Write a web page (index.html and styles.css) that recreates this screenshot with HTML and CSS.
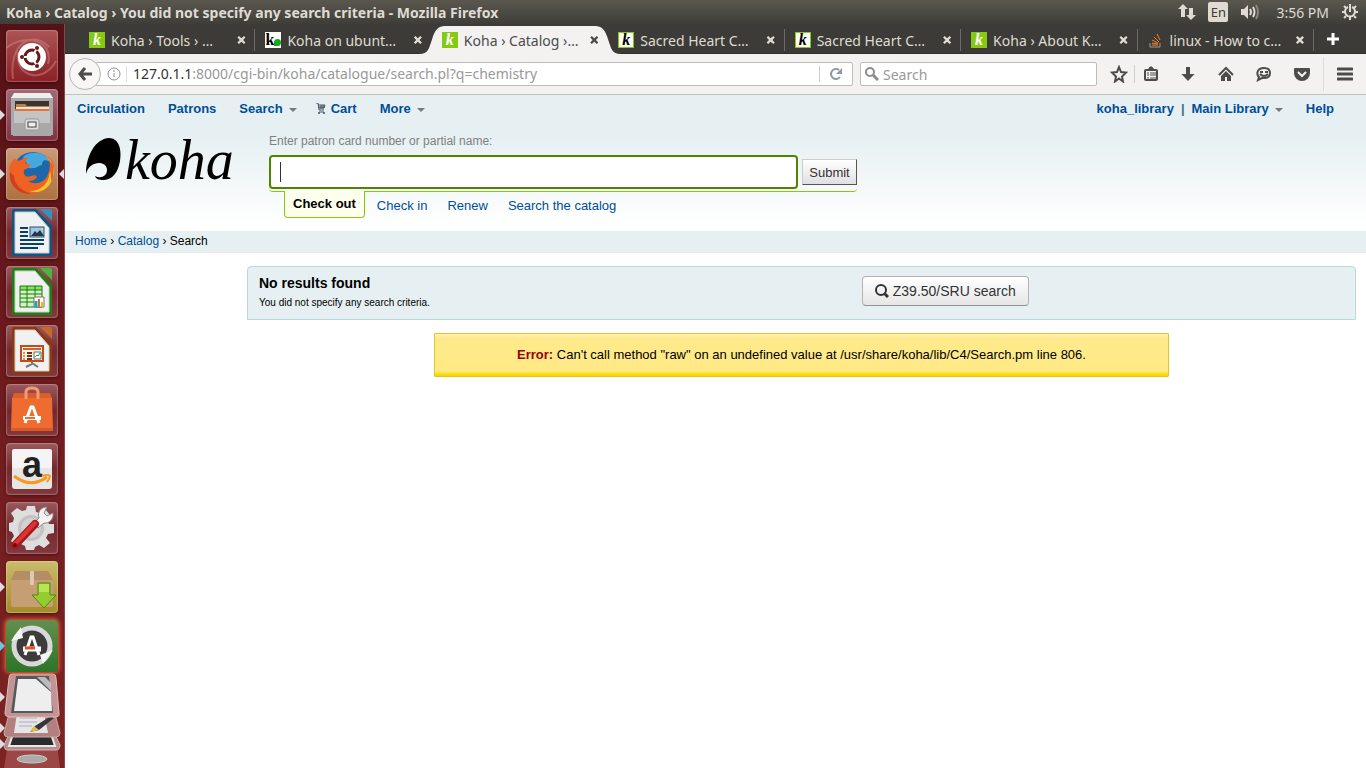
FILE: index.html
```html
<!doctype html>
<html lang="en">
  <head>
    <meta charset="UTF-8" />
    <meta name="viewport" content="width=device-width, initial-scale=1.0" />
    <title>Koha › Catalog › You did not specify any search criteria</title>
    <link rel="stylesheet" href="styles.css">
  </head>

  <body>
    <header class="panel">
      <div class="panel-title">Koha › Catalog › You did not specify any search criteria - Mozilla Firefox</div>
      <div class="panel-tray">
        <svg width="18" height="18" viewBox="0 0 18 18" fill="#dfdbd2"><path d="M5 1l5 5H7v8H3V6H0zM13 17l-5-5h3V5h4v7h3z"/></svg>
        <span class="lang">En</span>
        <svg width="20" height="16" viewBox="0 0 20 16" fill="none" stroke="#dfdbd2" stroke-width="2"><path d="M1 5h3l4-4v14l-4-4H1z" fill="#dfdbd2" stroke="none"/><path d="M10 5q2 3 0 6M13 3q3 5 0 10"/><path d="M16 1q4 7 0 14" stroke="#8a877e"/></svg>
        <span class="clock">3:56 PM</span>
        <svg width="18" height="18" viewBox="0 0 18 18" fill="none" stroke="#dfdbd2" stroke-width="2"><path d="M7 4a5 5 0 1 0 4 0"/><path d="M9 1v8M1 9h3M14 9h3M3 3l2 2M15 3l-2 2M3 15l2-2M15 15l-2-2M9 14v3"/></svg>
      </div>
    </header>

    <div class="desktop">
      <nav class="launcher" aria-label="Launcher">
        <button class="tile dash" aria-label="Dash">
          <svg viewBox="0 0 52 52"><g fill="none" stroke="#d99a9a" stroke-width="2" opacity=".4"><path d="M7 49C2 12 28 0 43 17M0 18C20 3 48 10 42 34M50 31C36 56 8 45 12 22"/></g><circle cx="26" cy="27" r="14" fill="#fff"/><circle cx="26" cy="27" r="7" fill="none" stroke="#6c1717" stroke-width="3"/><path d="M26 27H16M26 27l5-9M26 27l5 9" stroke="#fff" stroke-width="2"/><circle cx="26" cy="27" r="5" fill="#fff"/><g fill="#6c1717"><circle cx="16" cy="27" r="2"/><circle cx="31" cy="18" r="2"/><circle cx="31" cy="36" r="2"/></g></svg>
        </button>
        <button class="tile files running" aria-label="Files">
          <svg viewBox="0 0 52 52"><path d="M5 8h42v38H5z" fill="#a9a9a9"/><path d="M8 4h36l3 5H5z" fill="#eee"/><path d="M9 12h34v11H9z" fill="#3b3532"/><path d="M10 15h9l2 2h22v6H10z" fill="#c47c44"/><path d="M10 18h33v2H10z" fill="#f5e7da"/><path d="M9 20h34v2H9z" fill="#e57337"/><path d="M7 22h38v25H7z" fill="#a8a8a8"/><path d="M8 22h36v12H8z" fill="#c4c4c4"/><rect x="19" y="30" width="14" height="11" rx="2" fill="#ddd" stroke="#999"/><rect x="22" y="33" width="8" height="5" fill="#eee" stroke="#444"/></svg>
        </button>
        <button class="tile firefox running focused" aria-label="Firefox">
          <svg viewBox="0 0 52 52"><circle cx="27" cy="24" r="20" fill="#1e67a8"/><path d="M17 9c8-7 22-5 27 5-5-3-8-2-8 3-3 0-6 4-10 3-3 1-6-1-5-4z" fill="#45a9de"/><path d="M5 15l4-5c1 3 3 3 6 2 3-3 5-3 7-2-3 2-3 4-2 6h5l-3 4-4 2c-1 5 2 8 7 6 3-1 5-1 6 1-2 3-5 4-9 4 8 5 18 1 20-7 3-6 2-14-1-18 8 5 8 12 6 18-1 11-9 19-20 20C12 47 3 38 4 26q-2-5 1-11z" fill="#ee6224"/><path d="M40 9c9 7 10 16 5 24 0-4 0-8-1-10-1 12-8 20-21 20 16 5 27-9 24-25-1-5-4-8-7-9z" fill="#f8c22d"/><path d="M4 24c-2 12 8 23 22 22-10-3-17-8-18-18z" fill="#cf4020"/></svg>
        </button>
        <button class="tile" aria-label="LibreOffice Writer">
          <svg viewBox="0 0 52 52"><path d="M8 2h22l16 17v28q0 2-2 2H8q-2 0-2-2V4q0-2 2-2z" fill="#0f5686"/><path d="M34 2h10q2 0 2 2v10z" fill="#3d8cba"/><path d="M9 5h20l14 16v25H9z" fill="#f1f1f1" stroke="#ccc"/><path d="M14 21h8M14 25h8M14 29h8M14 33h24M14 37h24M14 41h18" stroke="#06416e" stroke-width="2"/><rect x="24" y="20" width="14" height="10" fill="#9cc9ec" stroke="#235377"/><path d="M25 29l4-5 2 2 3-3 4 6z" fill="#283a40"/><circle cx="36" cy="22" r="1" fill="#ffd43b"/></svg>
        </button>
        <button class="tile" aria-label="LibreOffice Calc">
          <svg viewBox="0 0 52 52"><path d="M8 2h22l16 17v28q0 2-2 2H8q-2 0-2-2V4q0-2 2-2z" fill="#198210"/><path d="M34 2h10q2 0 2 2v10z" fill="#4bb63c"/><path d="M9 5h20l14 16v25H9z" fill="#f1f1f1" stroke="#ccc"/><path d="M14 20h22v21H14z" fill="#d6f2c8"/><path d="M14 20h22v4H14z" fill="#8edb6e"/><path d="M14 20h22v21H14zM14 24h22M14 28h22M14 32h22M14 36h22M21 20v21M29 20v21" fill="none" stroke="#128000"/><path d="M28 31h10v10H28z" fill="#fff" stroke="#777"/><path d="M30 41v-6" stroke="#19a1d1" stroke-width="3"/><path d="M33 41v-8" stroke="#e26b1d" stroke-width="2"/><path d="M36 41v-5" stroke="#edba12" stroke-width="2"/></svg>
        </button>
        <button class="tile" aria-label="LibreOffice Impress">
          <svg viewBox="0 0 52 52"><path d="M8 2h22l16 17v28q0 2-2 2H8q-2 0-2-2V4q0-2 2-2z" fill="#8f380b"/><path d="M34 2h10q2 0 2 2v10z" fill="#c36a2b"/><path d="M9 5h20l14 16v25H9z" fill="#f1f1f1" stroke="#ccc"/><path d="M15 21h22v15H15z" fill="#faf3ee" stroke="#c14d16" stroke-width="2"/><path d="M17 24h18" stroke="#d46125" stroke-width="2"/><path d="M17 28h2M17 31h2M17 34h2" stroke="#dd8f65" stroke-width="2"/><path d="M21 28h5M21 31h5M21 34h5" stroke="#7c2e0b" stroke-width="2"/><path d="M28 27h7v7h-7z" fill="#fff" stroke="#666"/><path d="M29 32l2-2 1 1 2-3" fill="none" stroke="#299729"/><path d="M26 37v2l-6 3M26 38l6 4" fill="none" stroke="#777" stroke-width="2"/></svg>
        </button>
        <button class="tile" aria-label="Ubuntu Software">
          <svg viewBox="0 0 52 52"><path d="M6 14h40l1 33H5z" fill="#ef6c30"/><path d="M5 44h42v3H5z" fill="#d95924"/><path d="M6 14l2-5h36l2 5z" fill="#d95e2c"/><path d="M20 15V8q0-4 6-4t6 4v7" fill="none" stroke="#f39a74" stroke-width="3"/><path d="M19 39l6-16h2l6 16" fill="none" stroke="#fff" stroke-width="3"/><path d="M17 34h18" stroke="#fff" stroke-width="4"/><path d="M19 34h10" stroke="#ef6c30" stroke-width="2"/></svg>
        </button>
        <button class="tile" aria-label="Amazon">
          <svg viewBox="0 0 52 52"><rect x="6" y="6" width="40" height="40" rx="3" fill="#e6e6e6"/><rect x="6" y="6" width="40" height="19" rx="3" fill="#f4f4f4"/><text x="16" y="34" class="amazon-letter">a</text><path d="M8 33q17 13 33 1" fill="none" stroke="#f79a1c" stroke-width="3"/><path d="M36 33q6-2 8 0-1 4-3 6" fill="none" stroke="#f79a1c" stroke-width="2"/></svg>
        </button>
        <button class="tile" aria-label="System Settings">
          <svg viewBox="0 0 52 52"><path d="M21 4h8l1 6 4 1 5-4 5 6-3 5 2 4h5v9l-6 1-2 4 4 5-6 5-5-3-4 2-1 3h-8l-1-4-4-2-5 3-5-6 3-5-2-4-3-1v-8l4-1 1-4-3-5 6-5 5 3 4-1z" fill="#dedede"/><circle cx="25" cy="26" r="13" fill="#c2c2c2"/><circle cx="25" cy="26" r="10" fill="#d2d2d2"/><path d="M27 22l6-6c-2-6 2-11 8-11l-3 6 3 3 6-3c1 6-4 11-9 10l-6 5z" fill="#f3f3f3" stroke="#888"/><path d="M9 43l20-21" stroke="#a9171c" stroke-width="8" stroke-linecap="round"/><path d="M9 42l20-21" stroke="#db3434" stroke-width="4" stroke-linecap="round"/><circle cx="9" cy="43" r="2" fill="#611"/></svg>
        </button>
        <button class="tile installer running" aria-label="Software Updates">
          <svg viewBox="0 0 52 52"><path d="M9 10h33l5 9v25q0 2-2 2H7q-2 0-2-2V19z" fill="#c59e74"/><path d="M9 10h33l5 9H5z" fill="#b48d67"/><path d="M24 10h4v14h-4z" fill="#dfc8ad"/><path d="M32 22h12v12h6L38 47 26 34h6z" fill="#92ce30" stroke="#55860d"/><path d="M33 23h10v8H33z" fill="#b8e456"/></svg>
        </button>
        <button class="tile updater running waiting" aria-label="Software Updater">
          <svg viewBox="0 0 52 52"><circle cx="26" cy="26" r="18" fill="#3b3c3b" stroke="#d9d9d9" stroke-width="5"/><path d="M15 7L5 21l12-3M37 44l10-14-13 5" fill="#f5f5f5"/><path d="M19 35l6-18h2l6 18" fill="none" stroke="#fff" stroke-width="3"/><path d="M17 29h18" stroke="#fff" stroke-width="5"/><path d="M19 28h10" stroke="#e94f1c" stroke-width="3"/></svg>
        </button>
        <svg class="launcher-stack" width="64" height="95" viewBox="0 0 64 95">
          <path d="M8 71h49l3 24H4z" fill="#9d4646"/><ellipse cx="32" cy="86" rx="15" ry="4" fill="#aaa" stroke="#ccc"/>
          <path d="M11 57h42l7 15q0 5-4 5H8q-4 0-4-5z" fill="#b58b8b" stroke="#d0b1b1"/><path d="M14 58h36l5 15H9z" fill="#292b2d" stroke="#e7e7e7" stroke-width="2"/><path d="M26 63h9" stroke="#bbb" stroke-width="2"/>
          <path d="M10 37h44l6 23q0 4-4 4H8q-4 0-4-4z" fill="#b38080" stroke="#cda6a6"/><path d="M17 40h27l4 20H14z" fill="#e5e5e7"/><path d="M20 45h17M19 49h18M19 53h13" stroke="#a8adb7"/><path d="M30 59l5-6L51 43l3 2-15 12z" fill="#35353a"/><path d="M30 59l4-6 5 4z" fill="#e3bd43"/>
          <path d="M12 1h41q3 0 3 4l3 35q1 4-4 4H10q-5 0-5-4L9 5q0-4 3-4z" fill="#c29494" stroke="#dfbcbc"/><path d="M16 3h33l4 37H11z" fill="#56585a"/><path d="M18 6h18l15 13 1 19H14z" fill="#eee"/><path d="M37 4l14 14V10L45 4z" fill="#bbb"/>
          <path d="M0 19l5 5-5 5zM0 50l5 5-5 5zM0 66l5 5-5 5z" fill="#ddd"/>
        </svg>
      </nav>

      <div class="browser">
        <div class="tabs">
          <div class="tab">
            <span class="favicon">k</span><span class="tab-title">Koha › Tools › …</span><button class="tab-close" aria-label="Close tab"></button>
          </div>
          <div class="tab no-line">
            <span class="favicon dot">k</span><span class="tab-title">Koha on ubunt…</span><button class="tab-close" aria-label="Close tab"></button>
          </div>
          <div class="tab active">
            <span class="favicon">k</span><span class="tab-title">Koha › Catalog ›…</span><button class="tab-close" aria-label="Close tab"></button>
          </div>
          <div class="tab">
            <span class="favicon outline">k</span><span class="tab-title">Sacred Heart C…</span><button class="tab-close" aria-label="Close tab"></button>
          </div>
          <div class="tab">
            <span class="favicon outline">k</span><span class="tab-title">Sacred Heart C…</span><button class="tab-close" aria-label="Close tab"></button>
          </div>
          <div class="tab">
            <span class="favicon">k</span><span class="tab-title">Koha › About K…</span><button class="tab-close" aria-label="Close tab"></button>
          </div>
          <div class="tab">
            <svg width="16" height="16" viewBox="0 0 16 16" fill="none"><path d="M2 11v4h10v-4" stroke="#9a9c9f"/><path d="M4 13h6M4 11l6 1M4 8l6 3M6 5l5 5M9 2l3 6" stroke="#f48024"/></svg>
            <span class="tab-title">linux - How to c…</span><button class="tab-close" aria-label="Close tab"></button>
          </div>
          <button class="new-tab" aria-label="New tab"><svg width="14" height="14" viewBox="0 0 14 14"><path d="M7 1v12M1 7h12" stroke="#fff" stroke-width="3"/></svg></button>
        </div>

        <div class="toolbar">
          <button class="back" aria-label="Back"><svg width="16" height="16" viewBox="0 0 16 16" fill="none" stroke="#4c4c4c" stroke-width="3"><path d="M8 2L3 8l5 6M3 8h12"/></svg></button>
          <div class="url-box">
            <svg width="14" height="14" viewBox="0 0 14 14" fill="none" stroke="#929292"><circle cx="7" cy="7" r="6"/><path d="M7 6v4M7 3v2"/></svg>
            <span class="url"><b>127.0.1.1</b>:8000/cgi-bin/koha/catalogue/search.pl?q=chemistry</span>
            <button class="reload" aria-label="Reload"><svg width="14" height="14" viewBox="0 0 14 14" fill="none" stroke="#8b99a6" stroke-width="2"><path d="M10 3a5 5 0 1 0 1 7"/><path d="M13 1v6H7z" fill="#8b99a6" stroke="none"/></svg></button>
          </div>
          <div class="search-box">
            <svg width="14" height="14" viewBox="0 0 14 14" fill="none" stroke="#8d8d8d" stroke-width="2"><circle cx="5" cy="5" r="4"/><path d="M8 8l5 5" stroke-width="3"/></svg>
            <input type="search" placeholder="Search" aria-label="Search the web">
          </div>
          <div class="tools">
            <button class="tool" aria-label="Bookmark"><svg width="18" height="18" viewBox="0 0 18 18"><path d="M9 2l2 5 5 .5-4 4 1 5-4-3-4 3 1-5-4-4L7 7z" fill="none" stroke="#4c4c4c" stroke-width="2"/></svg></button>
            <button class="tool line" aria-label="Bookmarks list"><svg width="16" height="16" viewBox="0 0 16 16" fill="none" stroke="#4c4c4c"><rect x="2" y="4" width="12" height="10" rx="1" stroke-width="2"/><path d="M5 4l2-3h2l2 3z" fill="#4c4c4c"/><path d="M4 7h2M7 7h6M4 9h2M7 9h6M4 12h2M7 12h6"/></svg></button>
            <button class="tool" aria-label="Downloads"><svg width="16" height="16" viewBox="0 0 16 16"><path d="M6 1h4v7h4.500L8 15 1.500 8H6z" fill="#4c4c4c"/></svg></button>
            <button class="tool" aria-label="Home"><svg width="16" height="16" viewBox="0 0 16 16"><path d="M1 9l7-7 7 7" fill="none" stroke="#4c4c4c" stroke-width="2"/><path d="M8 5l5 5v5H9v-4H7v4H3v-5z" fill="#4c4c4c"/></svg></button>
            <button class="tool" aria-label="Chat"><svg width="16" height="16" viewBox="0 0 16 16"><path d="M8 2c4 0 6 2 6 5s-2 5-6 5H6l-4 2 1-3C0 8 1 2 8 2z" fill="none" stroke="#4c4c4c" stroke-width="2"/><path d="M4 6h3M9 6h3M4 8q4 4 8 0" fill="none" stroke="#4c4c4c" stroke-width="2"/></svg></button>
            <button class="tool" aria-label="Pocket"><svg width="16" height="16" viewBox="0 0 16 16"><path d="M1 2h14q1 0 1 1v4a8 8 0 0 1-16 0V3q0-1 1-1z" fill="#4c4c4c"/><path d="M4 6l4 4 4-4" fill="none" stroke="#f3f2f1" stroke-width="2"/></svg></button>
            <button class="tool menu" aria-label="Menu"><svg width="16" height="14" viewBox="0 0 16 14"><path d="M1 2h14M1 7h14M1 12h14" stroke="#4c4c4c" stroke-width="3" stroke-linecap="round"/></svg></button>
          </div>
        </div>

        <div class="page">
          <div class="page-header">
            <nav class="main-nav">
              <a href="#">Circulation</a>
              <a href="#">Patrons</a>
              <a href="#" class="drop search-menu">Search</a>
              <a href="#" class="cart"><svg width="10" height="11" viewBox="0 0 10 11" fill="none" stroke="#456"><path d="M0 0h2l1 7h5M2 2h7l-1 3H3M3 4h6M5 2v4M7 2v4M3 9h5"/><circle cx="3" cy="10" r="1" fill="#456" stroke="none"/><circle cx="8" cy="10" r="1" fill="#456" stroke="none"/></svg>Cart</a>
              <a href="#" class="drop">More</a>
              <span class="user-nav">
                <a href="#">koha_library</a>
                <span>|</span>
                <a href="#" class="drop">Main Library</a>
                <a href="#" class="help">Help</a>
              </span>
            </nav>
            <div class="head-search">
              <a href="#" class="logo" aria-label="Koha home">
                <svg width="164" height="70" viewBox="0 0 164 70">
                  <path d="M1 52C1 34 10 17 24 16c10 0 13 12 11 23-2 12-8 19-17 19-4 0-7-1-8-4 6 3 12 0 12-6 0-10-18-10-21 4z"/>
                  <text x="40" y="57">koha</text>
                </svg>
              </a>
              <div class="search-area">
                <label for="findborrower">Enter patron card number or partial name:</label>
                <form class="search-form">
                  <input type="text" id="findborrower">
                  <button type="submit">Submit</button>
                </form>
                <ul class="search-tabs">
                  <li class="current"><a href="#">Check out</a></li>
                  <li><a href="#">Check in</a></li>
                  <li><a href="#">Renew</a></li>
                  <li><a href="#">Search the catalog</a></li>
                </ul>
              </div>
            </div>
          </div>

          <div class="breadcrumbs"><a href="#">Home</a> › <a href="#">Catalog</a> › Search</div>

          <main class="content">
            <div class="search-header">
              <div>
                <h1>No results found</h1>
                <p>You did not specify any search criteria.</p>
              </div>
              <div>
                <button class="btn"><svg width="14" height="14" viewBox="0 0 14 14" fill="none" stroke="#333" stroke-width="2"><circle cx="6" cy="6" r="5"/><path d="M9 9l4 4" stroke-width="3"/></svg>Z39.50/SRU search</button>
              </div>
            </div>
            <div class="alert"><strong>Error:</strong> Can't call method "raw" on an undefined value at /usr/share/koha/lib/C4/Search.pm line 806.</div>
          </main>
        </div>
      </div>
    </div>
  </body>
</html>
```
FILE: styles.css
```css
* {
  box-sizing: border-box;
}

body {
  margin: 0;
  min-height: 100vh;
  display: flex;
  flex-direction: column;
  font-family: "Noto Sans", sans-serif;
  font-size: 14px;
  background: #fff;
}

button {
  font: inherit;
  padding: 0;
  border: none;
  background: none;
}

svg {
  display: block;
  flex: none;
}

a {
  color: #004d99;
  text-decoration: none;
}

/* top panel */
.panel {
  display: flex;
  justify-content: space-between;
  align-items: center;
  height: 24px;
  padding: 0 7px 0 6px;
  background: linear-gradient(#5a584e, #3e3d39);
  color: #dfdbd2;
}

.panel-title {
  font-size: 14px;
  font-weight: bold;
  white-space: nowrap;
}

.panel-tray {
  display: flex;
  align-items: center;
  gap: 12px;
}

.lang {
  width: 20px;
  height: 20px;
  line-height: 20px;
  border-radius: 2px;
  background: #dfdbd2;
  color: #3c3b37;
  text-align: center;
  font-size: 13px;
}

.clock {
  margin-left: 4px;
}

.desktop {
  flex: 1;
  display: flex;
}

/* launcher */
.launcher {
  display: flex;
  flex-direction: column;
  gap: 7px;
  width: 65px;
  padding: 6px 0 0 6px;
  border-right: 1px solid #88474b;
  background: linear-gradient(#551116, #701b1e 50%, #7d2422);
}

.tile {
  position: relative;
  width: 52px;
  height: 52px;
  border-radius: 4px;
  background: linear-gradient(#9a5a5e, #73282d 50%, #82393d);
  box-shadow: inset 0 0 1px 1px rgba(255, 255, 255, 0.25), 0 1px 3px rgba(0, 0, 0, 0.4);
}

.tile.dash {
  background: linear-gradient(#ad5457, #8b2023);
}

.tile.files {
  background: linear-gradient(#a46a75, #803040);
}

.tile.firefox {
  background: linear-gradient(#c99b78, #ad713e);
}

.tile.installer {
  background: linear-gradient(#cbbb6a, #a58a28);
}

.tile.updater {
  background: linear-gradient(#648f4e, #2d7427);
  box-shadow: 0 0 4px 1px #f3693b;
}

.tile.running::before,
.tile.focused::after {
  content: "";
  position: absolute;
  top: 21px;
  left: -6px;
  border: 5px solid transparent;
  border-left-color: #ddd;
  border-right-width: 0;
}

.tile.waiting::before {
  border-left-color: #66c6ee;
}

.tile.focused::after {
  left: auto;
  right: -6px;
  border-width: 5px 5px 5px 0;
  border-right-color: #ddd;
}

.amazon-letter {
  font: bold 36px "Liberation Sans", sans-serif;
  fill: #222;
}

.launcher-stack {
  margin: -6px 0 0 -6px;
}

/* browser */
.browser {
  flex: 1;
  min-width: 0;
  display: flex;
  flex-direction: column;
}

.tabs {
  display: flex;
  height: 30px;
  padding-left: 14px;
  border-bottom: 1px solid #2e2d2a;
  background: #3c3b37;
  color: #dfdbd2;
}

.tab {
  position: relative;
  flex: 1;
  min-width: 0;
  display: flex;
  align-items: center;
  gap: 6px;
  height: 28px;
  margin-top: 2px;
  padding: 0 9px 0 10px;
  background: linear-gradient(#6c6b67, #6c6b67) right center / 1px 22px no-repeat;
}

.tab.no-line {
  background: none;
}

.tab.active {
  z-index: 1;
  background: linear-gradient(#f3f2f1, #f3f2f1) center / calc(100% - 24px) 100% no-repeat;
  color: #4c4c4c;
}

.tab.active::before,
.tab.active::after {
  content: "";
  position: absolute;
  z-index: -1;
  top: 0;
  left: -13px;
  width: 26px;
  height: 28px;
  background: #f3f2f1;
  clip-path: path("M0 28C10 28 10 22 13 14C16 3 20 0 26 0V28Z");
}

.tab.active::after {
  left: auto;
  right: -13px;
  clip-path: path("M26 28C16 28 16 22 13 14C10 3 6 0 0 0V28Z");
}

.favicon {
  position: relative;
  flex: none;
  width: 16px;
  height: 16px;
  background: #85ca11;
  color: #fff;
  font: italic bold 16px/15px "Liberation Serif", serif;
  text-align: center;
}

.favicon.outline,
.favicon.dot {
  background: #fff;
  color: #000;
}

.favicon.outline {
  border: 1px solid #85ca11;
  line-height: 13px;
}

.favicon.dot {
  font-style: normal;
  text-align: left;
}

.favicon.dot::after {
  content: "";
  position: absolute;
  right: 0;
  bottom: 2px;
  width: 7px;
  height: 7px;
  border-radius: 50% 50% 50% 0;
  background: #1aa51a;
}

.tab-title {
  flex: 1;
  overflow: hidden;
  white-space: nowrap;
}

.tab-close {
  width: 10px;
  height: 10px;
  background: currentColor;
  color: inherit;
  clip-path: polygon(10% 25%, 25% 10%, 50% 33%, 75% 10%, 90% 25%, 67% 50%, 90% 75%, 75% 90%, 50% 67%, 25% 90%, 10% 75%, 33% 50%);
}

.new-tab {
  display: flex;
  align-items: center;
  width: 52px;
  padding-left: 12px;
}

.toolbar {
  display: flex;
  align-items: center;
  height: 41px;
  padding-left: 4px;
  border-bottom: 1px solid #c5c2be;
  background: #f3f2f1;
}

.back {
  z-index: 1;
  display: flex;
  align-items: center;
  justify-content: center;
  width: 32px;
  height: 32px;
  border: 1px solid #b7b4b0;
  border-radius: 50%;
  background: #f8f7f6;
}

.url-box,
.search-box {
  display: flex;
  align-items: center;
  height: 24px;
  border: 1px solid #bfbcb8;
  border-radius: 2px;
  background: #fff;
  color: #999;
}

.url-box {
  flex: 1;
  min-width: 0;
  margin-left: -6px;
  padding-left: 11px;
}

.url {
  flex: 1;
  height: 16px;
  line-height: 16px;
  margin-left: 5px;
  padding-left: 6px;
  border-left: 1px solid #ddd;
  white-space: nowrap;
}

.url b {
  font-weight: normal;
  color: #333;
}

.reload {
  padding: 1px 9px;
  border-left: 1px solid #ccc;
}

.search-box {
  width: 237px;
  margin-left: 7px;
  padding-left: 4px;
  gap: 4px;
}

.search-box input {
  flex: 1;
  min-width: 0;
  padding: 0;
  border: none;
  outline: none;
  background: none;
  font: inherit;
}

.search-box input::placeholder {
  color: #999;
}

.tools {
  display: flex;
  align-items: center;
  margin-left: 6px;
}

.tool {
  display: flex;
  align-items: center;
  justify-content: center;
  width: 38px;
  height: 18px;
}

.tool:first-child {
  width: 31px;
}

.tool.line {
  width: 32px;
  margin-right: 3px;
  border-left: 1px solid #d2d0cd;
}

.tool.menu {
  width: 43px;
  height: 34px;
  margin-left: 2px;
  border-left: 1px solid #dedcd9;
}

/* koha page */
.page {
  flex: 1;
  font-family: "Liberation Sans", Arial, sans-serif;
  font-size: 13px;
  background: #fff;
  color: #000;
}

.page-header {
  padding-bottom: 13px;
  background: linear-gradient(#e6f0f2 30%, #fff 95%);
}

.main-nav {
  display: flex;
  align-items: center;
  height: 27px;
  padding: 0 32px 0 12px;
  gap: 23px;
  font-weight: bold;
}

.main-nav .drop::after {
  content: "";
  display: inline-block;
  margin-left: 6px;
  vertical-align: 1px;
  border: 4px solid transparent;
  border-top-color: #777;
  border-bottom-width: 0;
}

.cart {
  display: flex;
  align-items: center;
  gap: 5px;
}

.search-menu {
  margin-right: -4px;
}

.user-nav {
  display: flex;
  gap: 7px;
  margin-left: auto;
  color: #4a6c8c;
}

.help {
  margin-left: 16px;
}

.head-search {
  display: flex;
  padding-left: 20px;
}

.logo {
  width: 184px;
}

.logo text {
  font: italic 56px "Liberation Serif", serif;
}

.search-area {
  width: 588px;
  padding-top: 11px;
}

.search-area label {
  display: block;
  font-size: 12px;
  line-height: 16px;
  color: #808080;
}

.search-form {
  display: flex;
  align-items: center;
  gap: 4px;
  margin-top: 6px;
  padding-bottom: 2px;
  border-bottom: 1px solid #85ca11;
  border-radius: 0 0 4px 4px;
}

.search-form input {
  flex: 1;
  height: 34px;
  padding: 0 9px;
  border: 2px solid #538200;
  border-radius: 4px;
  background: linear-gradient(#333, #333) 9px center / 1px 20px no-repeat #fff;
}

.search-form button {
  width: 55px;
  height: 26px;
  border: 1px solid #ccc;
  border-right-color: #555;
  border-bottom-color: #555;
  background: linear-gradient(#fff, #e0e0e0);
  color: #333;
}

.search-tabs {
  display: flex;
  height: 27px;
  margin: -1px 0 0;
  padding: 0 0 0 15px;
  list-style: none;
}

.search-tabs li {
  padding: 7px 10px 0;
  line-height: 16px;
}

.search-tabs .current {
  margin-right: 2px;
  padding: 5px 8px 0;
  border: 1px solid #85ca11;
  border-top: none;
  border-radius: 0 0 4px 4px;
  background: #ffffee;
  font-weight: bold;
}

.search-tabs .current a {
  color: #000;
}

.breadcrumbs {
  height: 22px;
  padding-left: 10px;
  background: #e6f0f2;
  font-size: 12px;
  line-height: 21px;
}

.content {
  margin: 13px 10px 0 182px;
}

.search-header {
  display: grid;
  grid-template-columns: 5fr 4fr;
  padding: 9px 11px 8px;
  border: 1px solid #b9d8d9;
  border-radius: 4px 4px 0 0;
  background: #e6f0f2;
}

.search-header h1 {
  margin: 0;
  font-size: 14px;
  line-height: 15px;
}

.search-header p {
  margin: 4px 0 0;
  font-size: 10px;
  line-height: 16px;
}

.btn {
  display: flex;
  align-items: center;
  gap: 4px;
  height: 30px;
  padding: 0 12px;
  border: 1px solid #b3b3b3;
  border-bottom-color: #929292;
  border-radius: 4px;
  background: linear-gradient(#fff, #e6e6e6);
  color: #333;
  font-size: 14px;
}

.alert {
  box-sizing: content-box;
  width: 64%;
  margin: 13px auto 0;
  padding: 13px 12px;
  border: 1px solid #e0c726;
  border-radius: 1px;
  background: linear-gradient(#fff2b5, #ffea8c 10%, #ffea85 88%, #f8d800 97%);
  line-height: 16px;
  text-align: center;
}

.alert strong {
  color: #990000;
}
```
